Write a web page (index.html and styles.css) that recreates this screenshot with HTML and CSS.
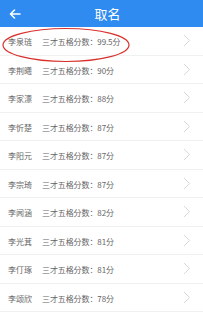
FILE: index.html
```html
<!DOCTYPE html>
<html lang="zh">
<head>
  <meta charset="UTF-8">
  <meta name="viewport" content="width=device-width, initial-scale=1">
  <title>取名</title>
  <link rel="stylesheet" href="styles.css">
</head>
<body>
  <header class="topbar">
    <span class="back">
      <svg width="12" height="10" viewBox="0 0 12 10"><path d="M11 5H2M5.5 1L1.5 5l4 4" fill="none" stroke="#fff" stroke-width="1.6" stroke-linecap="round" stroke-linejoin="round"/></svg>
    </span>
    <h1>取名</h1>
  </header>

  <main class="list">
    <div class="row"><span class="name">李泉琏</span><span class="score">三才五格分数：99.5分</span><svg class="chev" width="8" height="13" viewBox="0 0 8 13"><path d="M1 1l5.5 5.5L1 12" fill="none" stroke="#d8d8d8" stroke-width="1"/></svg></div>
    <div class="row"><span class="name">李荆曦</span><span class="score">三才五格分数：90分</span><svg class="chev" width="8" height="13" viewBox="0 0 8 13"><path d="M1 1l5.5 5.5L1 12" fill="none" stroke="#d8d8d8" stroke-width="1"/></svg></div>
    <div class="row"><span class="name">李家漂</span><span class="score">三才五格分数：88分</span><svg class="chev" width="8" height="13" viewBox="0 0 8 13"><path d="M1 1l5.5 5.5L1 12" fill="none" stroke="#d8d8d8" stroke-width="1"/></svg></div>
    <div class="row"><span class="name">李忻楚</span><span class="score">三才五格分数：87分</span><svg class="chev" width="8" height="13" viewBox="0 0 8 13"><path d="M1 1l5.5 5.5L1 12" fill="none" stroke="#d8d8d8" stroke-width="1"/></svg></div>
    <div class="row"><span class="name">李阳元</span><span class="score">三才五格分数：87分</span><svg class="chev" width="8" height="13" viewBox="0 0 8 13"><path d="M1 1l5.5 5.5L1 12" fill="none" stroke="#d8d8d8" stroke-width="1"/></svg></div>
    <div class="row"><span class="name">李宗琦</span><span class="score">三才五格分数：87分</span><svg class="chev" width="8" height="13" viewBox="0 0 8 13"><path d="M1 1l5.5 5.5L1 12" fill="none" stroke="#d8d8d8" stroke-width="1"/></svg></div>
    <div class="row"><span class="name">李闻涵</span><span class="score">三才五格分数：82分</span><svg class="chev" width="8" height="13" viewBox="0 0 8 13"><path d="M1 1l5.5 5.5L1 12" fill="none" stroke="#d8d8d8" stroke-width="1"/></svg></div>
    <div class="row"><span class="name">李光萁</span><span class="score">三才五格分数：81分</span><svg class="chev" width="8" height="13" viewBox="0 0 8 13"><path d="M1 1l5.5 5.5L1 12" fill="none" stroke="#d8d8d8" stroke-width="1"/></svg></div>
    <div class="row"><span class="name">李仃琢</span><span class="score">三才五格分数：81分</span><svg class="chev" width="8" height="13" viewBox="0 0 8 13"><path d="M1 1l5.5 5.5L1 12" fill="none" stroke="#d8d8d8" stroke-width="1"/></svg></div>
    <div class="row"><span class="name">李颂欣</span><span class="score">三才五格分数：78分</span><svg class="chev" width="8" height="13" viewBox="0 0 8 13"><path d="M1 1l5.5 5.5L1 12" fill="none" stroke="#d8d8d8" stroke-width="1"/></svg></div>

    <!-- 手绘的红圈 -->
    <svg class="circle" width="132" height="38" viewBox="0 0 132 38"><ellipse cx="66" cy="19" rx="63" ry="16.5" fill="none" stroke="#d9302c" stroke-width="1.2"/></svg>
  </main>
</body>
</html>
```

FILE: styles.css
```css
* { margin: 0; padding: 0; box-sizing: border-box; }

body {
  background: #fff;
  font-family: "Noto Sans CJK SC", "Noto Sans", sans-serif;
  color: #666;
  overflow: hidden;
}

.topbar {
  height: 27px;
  background: #2f8bef;
  display: flex;
  align-items: center;
  position: relative;
}

.back {
  display: flex;
  padding-left: 9px;
}

.topbar h1 {
  position: absolute;
  left: 0;
  right: 0;
  text-align: center;
  padding-left: 12px;
  font-size: 13px;
  font-weight: normal;
  color: #fff;
  line-height: 27px;
}

.list {
  position: relative;
}

.row {
  height: 28.5px;
  display: flex;
  align-items: center;
  padding: 2px 0 0 8px;
  border-bottom: 1px solid #f0f0f0;
  font-size: 8px;
}

.name {
  width: 34px;
}

.score {
  flex: 1;
  letter-spacing: -0.1px;
}

.chev {
  margin: -2px 12px 0 0;
}

.circle {
  position: absolute;
  left: 0;
  top: -1px;
}
```
